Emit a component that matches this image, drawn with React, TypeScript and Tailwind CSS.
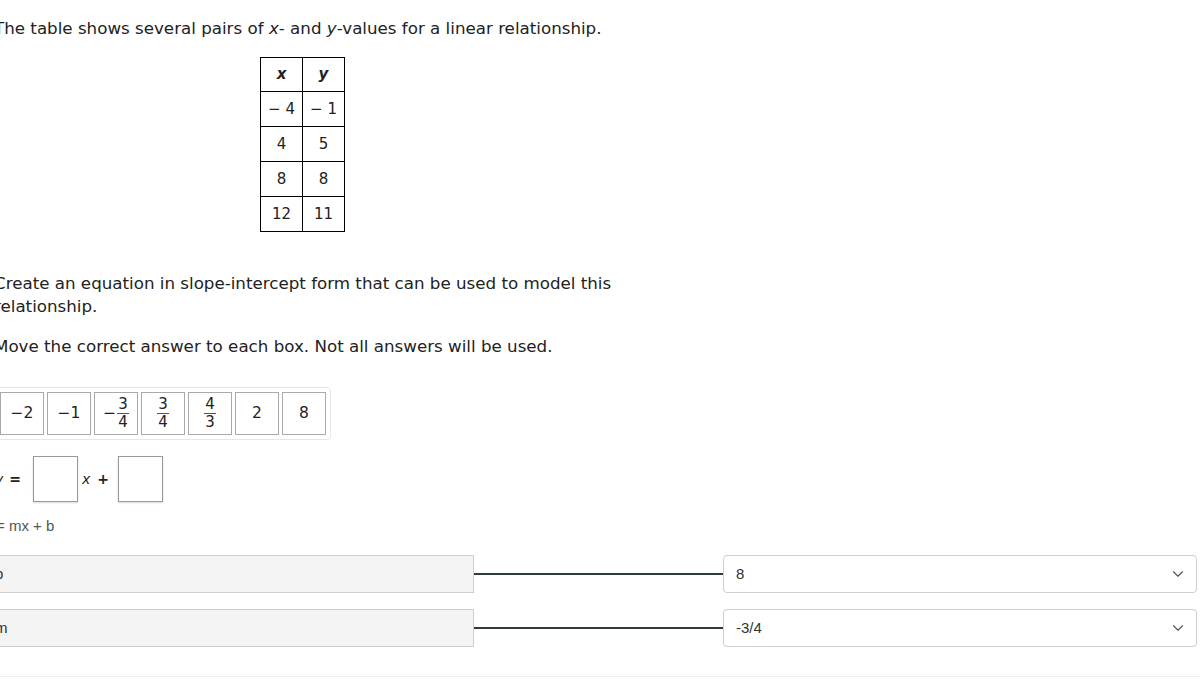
import { ChevronDown } from "lucide-react";

const verdana = "font-['DejaVu_Sans',Verdana,sans-serif]";
const arial = "font-['Liberation_Sans',Arial,sans-serif]";

const rows = [
  ["-4", "-1"],
  ["4", "5"],
  ["8", "8"],
  ["12", "11"],
];

function Num({ v }: { v: string }) {
  return <>{v.startsWith("-") ? `\u2212 ${v.slice(1)}` : v}</>;
}

function Frac({ n, d, neg }: { n: string; d: string; neg?: boolean }) {
  return (
    <span className="inline-flex items-center">
      {neg && <span className="mr-[1px]">−</span>}
      <span className="inline-flex flex-col items-center text-[15px] leading-[17px]">
        <span className="px-[1px]">{n}</span>
        <span className="h-px w-full bg-[#555]" />
        <span className="px-[1px]">{d}</span>
      </span>
    </span>
  );
}

function Tile({ children }: { children: React.ReactNode }) {
  return (
    <div className="flex h-[43px] w-[44px] items-center justify-center border border-[#a9a9a9] bg-white text-[15.5px] text-[#222]">
      {children}
    </div>
  );
}

function MatchRow({ label, value }: { label: string; value: string }) {
  return (
    <div className="flex items-center">
      <div className={`flex h-[38px] w-[486px] items-center border border-[#cfcfcf] bg-[#f4f4f4] pl-[6px] text-[15px] text-[#333] ${arial}`}>
        {label}
      </div>
      <div className="h-[2px] flex-1 bg-[#2f3a3a]" />
      <div className={`flex h-[38px] w-[474px] items-center justify-between rounded-[4px] border border-[#cfcfcf] bg-white pl-[12px] pr-[9px] text-[15px] text-[#333] ${arial}`}>
        <span>{value}</span>
        <ChevronDown className="h-[18px] w-[18px] text-[#555]" strokeWidth={1.5} />
      </div>
    </div>
  );
}

export default function App() {
  return (
    <div className={`h-[697px] w-[1200px] overflow-hidden bg-white text-[#222] ${verdana}`}>
      <div className="ml-[-6px] pt-[17px] text-[16.7px] leading-[23px]">
        The table shows several pairs of <i>x</i>- and <i>y</i>-values for a linear relationship.
      </div>

      {/* values table */}
      <div className="ml-[260px] mt-[17px]">
        <table className="border-collapse text-[15px]">
          <thead>
            <tr>
              <th className="h-[34px] w-[42px] border border-black font-bold italic">x</th>
              <th className="h-[34px] w-[42px] border border-black font-bold italic">y</th>
            </tr>
          </thead>
          <tbody>
            {rows.map((r, i) => (
              <tr key={i}>
                {r.map((c, j) => (
                  <td key={j} className="h-[35px] border border-black text-center">
                    <Num v={c} />
                  </td>
                ))}
              </tr>
            ))}
          </tbody>
        </table>
      </div>

      <div className="ml-[-6px] mt-[40px] w-[640px] text-[16.7px] leading-[23px]">
        Create an equation in slope-intercept form that can be used to model this relationship.
      </div>
      <div className="ml-[-6px] mt-[17px] text-[16.7px] leading-[23px]">
        Move the correct answer to each box. Not all answers will be used.
      </div>

      {/* answer tray */}
      <div className="ml-[-5px] mt-[29px] inline-flex gap-[3px] rounded-[4px] border border-[#e6e6e6] p-[4px]">
        <Tile>−2</Tile>
        <Tile>−1</Tile>
        <Tile>
          <Frac n="3" d="4" neg />
        </Tile>
        <Tile>
          <Frac n="3" d="4" />
        </Tile>
        <Tile>
          <Frac n="4" d="3" />
        </Tile>
        <Tile>2</Tile>
        <Tile>8</Tile>
      </div>

      {/* equation */}
      <div className="ml-[-5px] mt-[16px] flex items-center text-[14px]">
        <i>y</i>
        <span className="ml-[6px] font-bold">=</span>
        <div className="ml-[12px] h-[46px] w-[45px] border border-[#999] bg-white shadow-[0_1px_2px_rgba(0,0,0,0.15)]" />
        <i className="ml-[4px]">x</i>
        <span className="ml-[7px] font-bold">+</span>
        <div className="ml-[9px] h-[46px] w-[45px] border border-[#999] bg-white shadow-[0_1px_2px_rgba(0,0,0,0.15)]" />
      </div>

      <div className={`ml-[-4px] mt-[14px] text-[15px] leading-[20px] text-[#555] ${arial}`}>= mx + b</div>

      {/* matching */}
      <div className="ml-[-12px] mr-[3px] mt-[19px] flex flex-col gap-[16px]">
        <MatchRow label="b" value="8" />
        <MatchRow label="m" value="-3/4" />
      </div>

      <div className="mt-[29px] border-t border-[#eeeeee]" />
    </div>
  );
}
